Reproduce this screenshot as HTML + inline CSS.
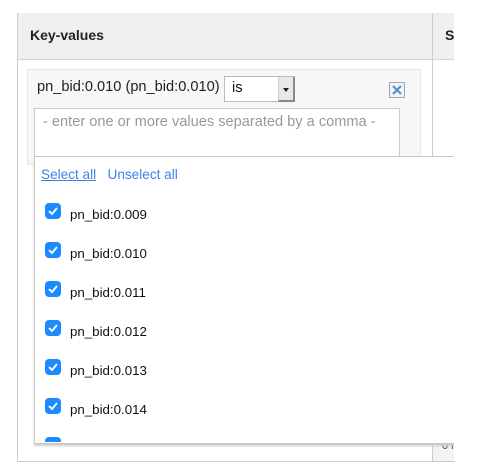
<!DOCTYPE html>
<html><head><style>
body{margin:0;width:479px;height:472px;background:#fff;font-family:"Liberation Sans",Arial,sans-serif;position:relative;overflow:hidden}
.a{position:absolute}
</style></head><body>
<div class="a" style="left:17px;top:13px;width:437px;height:448px;border-left:1px solid #ccc;border-bottom:1px solid #ccc"></div>
<div class="a" style="left:18px;top:13px;width:436px;height:46px;background:#efefef;border-bottom:1px solid #d6d6d6"></div>
<div class="a" style="left:432px;top:13px;width:1px;height:448px;background:#ccc"></div>
<div class="a" style="left:433px;top:440px;width:21px;height:21px;background:#f3f3f3"></div>
<div class="a" style="left:442px;top:440px;font-size:11px;color:#444">0 i</div>
<div class="a" style="left:30px;top:27px;font-size:14px;font-weight:bold;color:#222">Key-values</div>
<div class="a" style="left:445px;top:27px;font-size:14px;font-weight:bold;color:#222">S</div>
<div class="a" style="left:27px;top:69px;width:392px;height:94px;background:#f7f7f7;border:1px solid #e6e6e6"></div>
<div class="a" style="left:37px;top:79px;font-size:14.6px;color:#222">pn_bid:0.010 (pn_bid:0.010)</div>
<div class="a" style="left:224px;top:76px;width:71px;height:26px;background:#fff;border:1px solid #bbb;box-sizing:border-box"></div>
<div class="a" style="left:232px;top:80px;font-size:14.6px;color:#111">is</div>
<div class="a" style="left:278px;top:77px;width:17px;height:25px;background:#e8e8e8;border-left:1px solid #ccc;border-right:2px solid #888;border-bottom:2px solid #888;box-sizing:border-box"></div>
<div class="a" style="left:283px;top:88px;width:0;height:0;border-left:3px solid transparent;border-right:3px solid transparent;border-top:4px solid #222"></div>
<svg class="a" style="left:389px;top:82px" width="16" height="16"><rect x=".5" y=".5" width="15" height="15" fill="#eef3fa" stroke="#9ab" /><path d="M4 4L12 12M12 4L4 12" stroke="#5a8ac6" stroke-width="2"/></svg>
<div class="a" style="left:34px;top:108px;width:366px;height:50px;background:#fff;border:1px solid #ccc;box-sizing:border-box"></div>
<div class="a" style="left:43px;top:114px;font-size:14.6px;color:#999">- enter one or more values separated by a comma -</div>
<div class="a" style="left:0;top:0;width:454px;height:472px;overflow:hidden">
<div class="a" style="left:34px;top:156px;width:430px;height:286px;background:#fff;border:1px solid #c8c8c8;box-shadow:0 2px 2px #ccc"></div>
</div>
<div class="a" style="left:41px;top:167px;font-size:13.6px;color:#3b82e8"><span style="text-decoration:underline">Select all</span>&nbsp;&nbsp; Unselect all</div>
<div class="a" style="left:45px;top:203px;line-height:39px;font-size:13.3px;color:#111">
<div style="position:relative;height:39px"><span style="position:absolute;left:0;top:0;width:16px;height:16px;background:#1a8cff;border-radius:4px"></span><span style="position:absolute;left:25px;top:-8px">pn_bid:0.009</span></div>
<div style="position:relative;height:39px"><span style="position:absolute;left:0;top:0;width:16px;height:16px;background:#1a8cff;border-radius:4px"></span><span style="position:absolute;left:25px;top:-8px">pn_bid:0.010</span></div>
<div style="position:relative;height:39px"><span style="position:absolute;left:0;top:0;width:16px;height:16px;background:#1a8cff;border-radius:4px"></span><span style="position:absolute;left:25px;top:-8px">pn_bid:0.011</span></div>
<div style="position:relative;height:39px"><span style="position:absolute;left:0;top:0;width:16px;height:16px;background:#1a8cff;border-radius:4px"></span><span style="position:absolute;left:25px;top:-8px">pn_bid:0.012</span></div>
<div style="position:relative;height:39px"><span style="position:absolute;left:0;top:0;width:16px;height:16px;background:#1a8cff;border-radius:4px"></span><span style="position:absolute;left:25px;top:-8px">pn_bid:0.013</span></div>
<div style="position:relative;height:39px"><span style="position:absolute;left:0;top:0;width:16px;height:16px;background:#1a8cff;border-radius:4px"></span><span style="position:absolute;left:25px;top:-8px">pn_bid:0.014</span></div>
</div>
<div class="a" style="left:45px;top:437px;width:16px;height:5px;background:#1a8cff;border-radius:4px 4px 0 0"></div>
<svg class="a" style="left:45px;top:203px" width="16" height="240"><g fill="none" stroke="#fff" stroke-width="1.8"><path d="M4 8l3 3 5-6"/><path d="M4 47l3 3 5-6"/><path d="M4 86l3 3 5-6"/><path d="M4 125l3 3 5-6"/><path d="M4 164l3 3 5-6"/><path d="M4 203l3 3 5-6"/></g></svg>
</body></html>
